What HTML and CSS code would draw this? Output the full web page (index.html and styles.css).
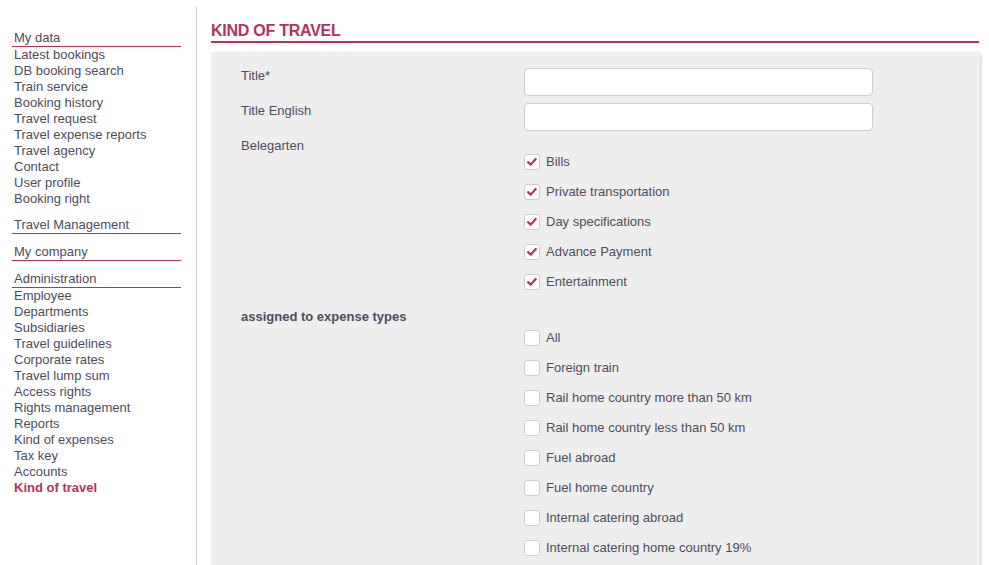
FILE: index.html
```html
<!DOCTYPE html>
<html>
<head>
<meta charset="utf-8">
<link rel="stylesheet" href="styles.css">
</head>
<body>
<div class="page">
  <nav class="sidebar">
    <div class="nav-head first">My data</div>
    <a class="nav-item">Latest bookings</a>
    <a class="nav-item">DB booking search</a>
    <a class="nav-item">Train service</a>
    <a class="nav-item">Booking history</a>
    <a class="nav-item">Travel request</a>
    <a class="nav-item">Travel expense reports</a>
    <a class="nav-item">Travel agency</a>
    <a class="nav-item">Contact</a>
    <a class="nav-item">User profile</a>
    <a class="nav-item">Booking right</a>
    <div class="nav-head">Travel Management</div>
    <div class="nav-head">My company</div>
    <div class="nav-head">Administration</div>
    <a class="nav-item">Employee</a>
    <a class="nav-item">Departments</a>
    <a class="nav-item">Subsidiaries</a>
    <a class="nav-item">Travel guidelines</a>
    <a class="nav-item">Corporate rates</a>
    <a class="nav-item">Travel lump sum</a>
    <a class="nav-item">Access rights</a>
    <a class="nav-item">Rights management</a>
    <a class="nav-item">Reports</a>
    <a class="nav-item">Kind of expenses</a>
    <a class="nav-item">Tax key</a>
    <a class="nav-item">Accounts</a>
    <a class="nav-item active">Kind of travel</a>
  </nav>
  <main class="main">
    <h1 class="title">KIND OF TRAVEL</h1>
    <div class="panel">
      <div class="row">
        <label class="label">Title*</label>
        <input class="input" type="text">
      </div>
      <div class="row">
        <label class="label">Title English</label>
        <input class="input" type="text">
      </div>
      <div class="label solo">Belegarten</div>
      <div class="checks">
        <div class="check"><span class="box on"><svg viewBox="0 0 16 16"><path d="M3.5 8.2 L6.6 11 L12.2 4.6"/></svg></span>Bills</div>
        <div class="check"><span class="box on"><svg viewBox="0 0 16 16"><path d="M3.5 8.2 L6.6 11 L12.2 4.6"/></svg></span>Private transportation</div>
        <div class="check"><span class="box on"><svg viewBox="0 0 16 16"><path d="M3.5 8.2 L6.6 11 L12.2 4.6"/></svg></span>Day specifications</div>
        <div class="check"><span class="box on"><svg viewBox="0 0 16 16"><path d="M3.5 8.2 L6.6 11 L12.2 4.6"/></svg></span>Advance Payment</div>
        <div class="check"><span class="box on"><svg viewBox="0 0 16 16"><path d="M3.5 8.2 L6.6 11 L12.2 4.6"/></svg></span>Entertainment</div>
      </div>
      <div class="label solo bold">assigned to expense types</div>
      <div class="checks second">
        <div class="check"><span class="box"></span>All</div>
        <div class="check"><span class="box"></span>Foreign train</div>
        <div class="check"><span class="box"></span>Rail home country more than 50 km</div>
        <div class="check"><span class="box"></span>Rail home country less than 50 km</div>
        <div class="check"><span class="box"></span>Fuel abroad</div>
        <div class="check"><span class="box"></span>Fuel home country</div>
        <div class="check"><span class="box"></span>Internal catering abroad</div>
        <div class="check"><span class="box"></span>Internal catering home country 19%</div>
      </div>
    </div>
  </main>
</div>
</body>
</html>
```
FILE: styles.css
```css
html, body {
  margin: 0;
  padding: 0;
  background: #fff;
  font-family: "Liberation Sans", Arial, sans-serif;
  font-size: 13px;
  line-height: 16px;
  color: #4d4d5c;
  overflow: hidden;
  height: 565px;
}
.page {
  display: flex;
  align-items: flex-start;
  padding-top: 6px;
}
.sidebar {
  width: 169px;
  flex: none;
  padding: 24px 15px 600px 12px;
  border-right: 1px solid #d4d4d4;
  display: flex;
  flex-direction: column;
}
.nav-head {
  margin-top: 10px;
  padding-left: 2px;
  border-bottom: 1px solid #b3335c;
  line-height: 16px;
}
.nav-head.first { margin-top: 0; }
.nav-item {
  display: block;
  padding-left: 2px;
  line-height: 16px;
  color: #4d4d5c;
}
.nav-item.active {
  color: #b3335c;
  font-weight: bold;
}
.main {
  flex: 1;
  padding: 0 10px 0 14px;
}
.title {
  margin: 16px 0 0;
  font-size: 16px;
  font-weight: bold;
  line-height: 18px;
  letter-spacing: -0.25px;
  color: #b3335c;
  padding-bottom: 1px;
  border-bottom: 2px solid #b3335c;
}
.panel {
  margin-top: 9px;
  margin-right: -1px;
  background: #eeeeee;
  border-radius: 4px;
  box-shadow: 1px 1px 3px rgba(0,0,0,0.22);
  padding: 16px 30px 40px 30px;
}
.row {
  display: flex;
  align-items: flex-start;
  margin-bottom: 7px;
}
.label {
  width: 283px;
  flex: none;
  line-height: 16px;
}
.row .label { padding-top: 0; line-height: 16px; }
.input {
  width: 349px;
  height: 28px;
  box-sizing: border-box;
  border: 1px solid #cfcfcf;
  border-radius: 4px;
  background: #fff;
  margin: 0;
  padding: 0 6px;
  font: inherit;
}
.solo { margin-top: 0; }
.bold { font-weight: bold; margin-top: 5px; }
.checks {
  padding-left: 283px;
  display: flex;
  flex-direction: column;
}
.checks.second { margin-top: 5px; }
.check {
  display: flex;
  align-items: center;
  height: 16px;
  margin-bottom: 14px;
  line-height: 16px;
}
.box {
  width: 16px;
  height: 16px;
  box-sizing: border-box;
  border: 1px solid #cfcfcf;
  border-radius: 3px;
  background: #fff;
  margin-right: 6px;
  flex: none;
  display: flex;
}
.box svg {
  width: 14px;
  height: 14px;
  fill: none;
  stroke: #b3335c;
  stroke-width: 2.6;
  stroke-linecap: round;
  stroke-linejoin: round;
}
```
